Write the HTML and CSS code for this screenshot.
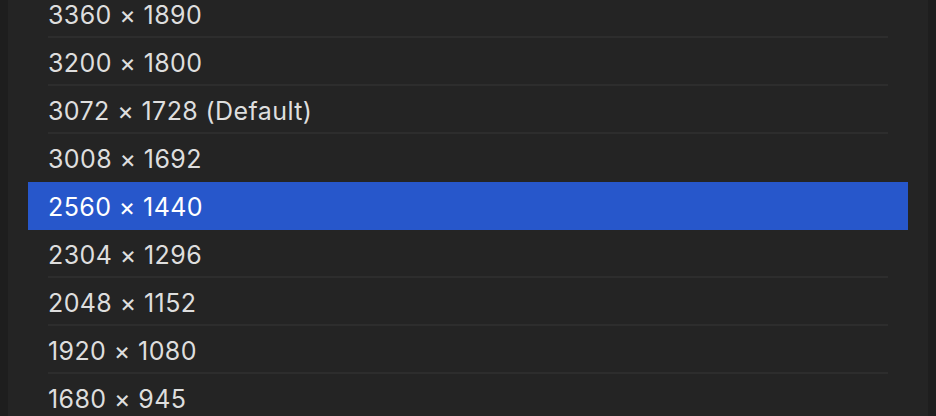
FILE: index.html
```html
<!DOCTYPE html>
<html lang="en">
<head>
    <meta charset="UTF-8">
    <meta name="viewport" content="width=device-width, initial-scale=1.0">
    <title>Resolution</title>
    <link rel="stylesheet" href="styles.css">
</head>
<body>
    <div class="panel">
        <ul class="res-list">
            <li class="res-row">3360 × 1890</li>
            <li class="res-row">3200 × 1800</li>
            <li class="res-row">3072 × 1728 (Default)</li>
            <li class="res-row before-selected">3008 × 1692</li>
            <li class="res-row selected">2560 × 1440</li>
            <li class="res-row">2304 × 1296</li>
            <li class="res-row">2048 × 1152</li>
            <li class="res-row">1920 × 1080</li>
            <li class="res-row">1680 × 945</li>
        </ul>
    </div>
</body>
</html>
```

FILE: styles.css
```css
html, body {
    margin: 0;
    padding: 0;
    height: 100%;
}

body {
    background: #1e1e1e;
    font-family: 'Inter', 'Liberation Sans', sans-serif;
    overflow: hidden;
    display: flex;
    padding: 0 8px;
}

.panel {
    flex: 1;
    background: #242424;
    overflow: hidden;
}

.res-list {
    list-style: none;
    margin: -10px 0 0 0;
    padding: 0 20px;
}

.res-row {
    height: 48px;
    box-sizing: border-box;
    padding: 2px 20px 0;
    display: flex;
    align-items: center;
    font-size: 25px;
    letter-spacing: 0.4px;
    color: #dedede;
    position: relative;
}

/* thin divider under each row, inset to the text column */
.res-row::after {
    content: '';
    position: absolute;
    left: 20px;
    right: 20px;
    bottom: 0;
    height: 2px;
    background: #2d2d2d;
}

.res-row.selected {
    background: #2757cb;
    color: #ffffff;
}

.res-row.selected::after,
.res-row.before-selected::after {
    display: none;
}
```
